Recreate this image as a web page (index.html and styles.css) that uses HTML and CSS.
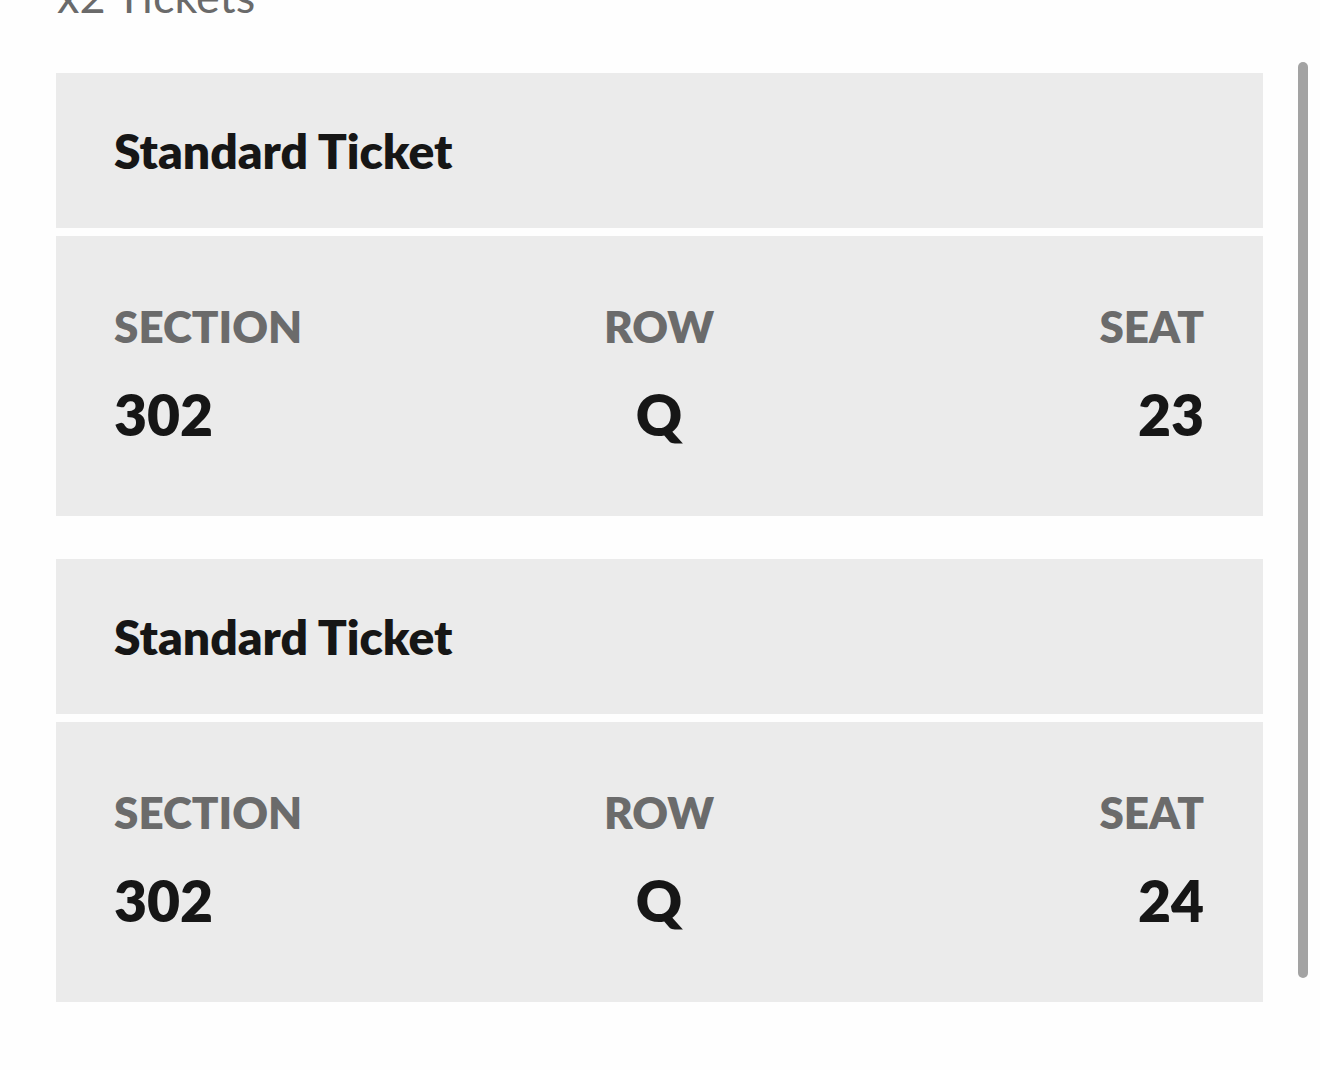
FILE: index.html
```html
<!DOCTYPE html>
<html lang="en">
<head>
    <meta charset="UTF-8">
    <meta name="viewport" content="width=device-width, initial-scale=1.0">
    <title>My Tickets</title>
    <link rel="stylesheet" href="styles.css">
</head>
<body>
    <div class="screen">
        <div class="ticket-list">
            <h2 class="tickets-title">x2 Tickets</h2>

            <div class="ticket">
                <div class="ticket-head">Standard Ticket</div>
                <div class="ticket-body">
                    <div class="seat-info">
                        <span class="seat-label">SECTION</span>
                        <span class="seat-value">302</span>
                    </div>
                    <div class="seat-info center">
                        <span class="seat-label">ROW</span>
                        <span class="seat-value">Q</span>
                    </div>
                    <div class="seat-info right">
                        <span class="seat-label">SEAT</span>
                        <span class="seat-value">23</span>
                    </div>
                </div>
            </div>

            <div class="ticket">
                <div class="ticket-head">Standard Ticket</div>
                <div class="ticket-body">
                    <div class="seat-info">
                        <span class="seat-label">SECTION</span>
                        <span class="seat-value">302</span>
                    </div>
                    <div class="seat-info center">
                        <span class="seat-label">ROW</span>
                        <span class="seat-value">Q</span>
                    </div>
                    <div class="seat-info right">
                        <span class="seat-label">SEAT</span>
                        <span class="seat-value">24</span>
                    </div>
                </div>
            </div>
        </div>

        <div class="scrollbar"></div>
    </div>
</body>
</html>
```

FILE: styles.css
```css
body {
    margin: 0;
    background-color: #fefefe;
    font-family: Lato, "Open Sans", sans-serif;
    overflow: hidden;
}

.screen {
    display: flex;
    align-items: flex-start;
    padding-left: 56px;
}

.ticket-list {
    width: 1207px;
}

.tickets-title {
    margin: -34px 0 47px 1px;
    font-size: 45px;
    font-weight: 400;
    line-height: 60px;
    color: #6a6a6a;
}

.ticket {
    margin-bottom: 43px;
}

.ticket-head {
    display: flex;
    align-items: center;
    height: 155px;
    padding: 0 58px;
    background-color: #ebebeb;
    font-size: 48px;
    font-weight: 800;
    color: #161616;
}

.ticket-body {
    display: grid;
    grid-template-columns: 1fr 1fr 1fr;
    height: 280px;
    box-sizing: border-box;
    margin-top: 8px;
    padding: 62px 59px 0 58px;
    background-color: #ebebeb;
}

.seat-info {
    display: flex;
    flex-direction: column;
}

.seat-info.center {
    align-items: center;
}

.seat-info.right {
    align-items: flex-end;
}

.seat-label {
    font-size: 44px;
    font-weight: 800;
    line-height: 56px;
    color: #6b6b6b;
}

.seat-value {
    margin-top: 30px;
    font-size: 57px;
    font-weight: 800;
    line-height: 60px;
    color: #161616;
}

.scrollbar {
    width: 10px;
    height: 916px;
    margin: 62px 0 0 35px;
    border-radius: 5px;
    background-color: #a3a3a3;
}
```
